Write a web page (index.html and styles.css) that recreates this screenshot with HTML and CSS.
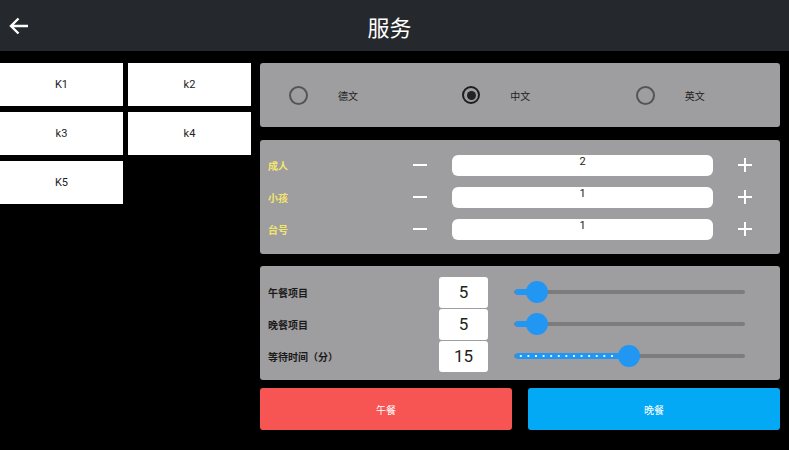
FILE: index.html
```html
<!DOCTYPE html>
<html lang="zh">
<head>
    <meta charset="UTF-8">
    <meta name="viewport" content="width=device-width, initial-scale=1.0">
    <title>服务</title>
    <link rel="stylesheet" href="styles.css">
</head>
<body>
    <div class="header">
        <button class="back-btn">
            <svg width="20" height="18" viewBox="0 0 20 18"><path d="M2 9H19M9.5 1.5L2 9L9.5 16.5" fill="none" stroke="#fff" stroke-width="2.4"/></svg>
        </button>
        <h1>服务</h1>
    </div>
    <div class="main">
        <div class="tables">
            <div class="tile">K1</div>
            <div class="tile">k2</div>
            <div class="tile">k3</div>
            <div class="tile">k4</div>
            <div class="tile">K5</div>
        </div>
        <div class="side">
            <div class="panel lang">
                <label class="lang-item"><span class="radio"></span>德文</label>
                <label class="lang-item"><span class="radio checked"></span>中文</label>
                <label class="lang-item"><span class="radio"></span>英文</label>
            </div>
            <div class="panel counters">
                <div class="counter-row">
                    <span class="counter-label">成人</span>
                    <span class="minus"></span>
                    <div class="count-box">2</div>
                    <span class="plus"></span>
                </div>
                <div class="counter-row">
                    <span class="counter-label">小孩</span>
                    <span class="minus"></span>
                    <div class="count-box">1</div>
                    <span class="plus"></span>
                </div>
                <div class="counter-row">
                    <span class="counter-label">台号</span>
                    <span class="minus"></span>
                    <div class="count-box">1</div>
                    <span class="plus"></span>
                </div>
            </div>
            <div class="panel settings">
                <div class="setting-row">
                    <span class="setting-label">午餐项目</span>
                    <div class="value-box">5</div>
                    <div class="slider">
                        <div class="track"></div>
                        <div class="fill" style="width: 23px"></div>
                        <div class="thumb" style="left: 23px"></div>
                    </div>
                </div>
                <div class="setting-row">
                    <span class="setting-label">晚餐项目</span>
                    <div class="value-box">5</div>
                    <div class="slider">
                        <div class="track"></div>
                        <div class="fill" style="width: 23px"></div>
                        <div class="thumb" style="left: 23px"></div>
                    </div>
                </div>
                <div class="setting-row">
                    <span class="setting-label">等待时间（分）</span>
                    <div class="value-box">15</div>
                    <div class="slider">
                        <div class="track"></div>
                        <div class="fill dotted" style="width: 115px"></div>
                        <div class="thumb" style="left: 115px"></div>
                    </div>
                </div>
            </div>
            <div class="actions">
                <button class="meal-btn lunch">午餐</button>
                <button class="meal-btn dinner">晚餐</button>
            </div>
        </div>
    </div>
</body>
</html>
```

FILE: styles.css
```css
body {
    margin: 0;
    background: #000;
    font-family: Roboto, "Noto Sans CJK SC", sans-serif;
    width: 789px;
    height: 450px;
    overflow: hidden;
}
.header {
    position: relative;
    height: 51px;
    background: #25282c;
    display: flex;
    align-items: center;
    justify-content: center;
    padding-right: 10px;
}
.header h1 {
    margin: 0;
    color: #fff;
    font-size: 22px;
    font-weight: normal;
}
.back-btn {
    position: absolute;
    left: 9px;
    top: 17px;
    padding: 0;
    border: none;
    background: none;
    display: flex;
}
.main {
    display: flex;
    gap: 10px;
}
.tables {
    width: 250px;
    padding-top: 12px;
    display: grid;
    grid-template-columns: 123px 123px;
    grid-auto-rows: 43px;
    column-gap: 5px;
    row-gap: 6px;
    align-content: start;
}
.tile {
    background: #fff;
    display: flex;
    align-items: center;
    justify-content: center;
    font-size: 11px;
    color: #222;
}
.side {
    width: 520px;
    padding-top: 12px;
    display: flex;
    flex-direction: column;
}
.panel {
    background: #9e9d9f;
    border-radius: 3px;
}
.lang {
    height: 64px;
    display: grid;
    grid-template-columns: repeat(3, 1fr);
    align-items: center;
}
.lang-item {
    display: flex;
    align-items: center;
    gap: 30px;
    padding-left: 29px;
    font-size: 10px;
    color: #222;
}
.radio {
    width: 15px;
    height: 15px;
    border: 2px solid #555;
    border-radius: 50%;
    display: flex;
    align-items: center;
    justify-content: center;
}
.radio.checked {
    border: 2.5px solid #1e1e1e;
    width: 14px;
    height: 14px;
}
.radio.checked::after {
    content: "";
    width: 9px;
    height: 9px;
    border-radius: 50%;
    background: #222;
}
.counters {
    margin-top: 13px;
    padding: 9px 3px 9px 8px;
}
.counter-row {
    height: 32px;
    display: flex;
    align-items: center;
}
.counter-label {
    width: 132px;
    font-size: 10px;
    font-weight: bold;
    color: #f3e66b;
}
.minus, .plus {
    position: relative;
    height: 14px;
}
.minus {
    width: 40px;
    margin-right: 12px;
}
.plus {
    width: 64px;
}
.minus::before, .plus::before, .plus::after {
    content: "";
    position: absolute;
    background: #fff;
}
.minus::before, .plus::before {
    left: 50%;
    top: 6px;
    width: 14px;
    height: 1.5px;
    margin-left: -7px;
}
.plus::after {
    left: 50%;
    top: 0;
    width: 1.5px;
    height: 14px;
    margin-left: -0.75px;
}
.count-box {
    width: 261px;
    height: 21px;
    background: #fff;
    border-radius: 6px;
    text-align: center;
    font-size: 11px;
    line-height: 13px;
    color: #222;
    align-self: flex-start;
    margin-top: 6px;
}
.settings {
    margin-top: 12px;
    padding: 10px 0 8px 8px;
}
.setting-row {
    height: 32px;
    display: flex;
    align-items: center;
}
.setting-label {
    width: 171px;
    font-size: 10px;
    font-weight: bold;
    color: #1a1a1a;
}
.value-box {
    width: 49px;
    height: 31px;
    background: #fff;
    border-radius: 3px;
    display: flex;
    align-items: center;
    justify-content: center;
    font-size: 17px;
    color: #222;
}
.slider {
    position: relative;
    width: 231px;
    height: 22px;
    margin-left: 26px;
}
.track {
    position: absolute;
    left: 0;
    right: 0;
    top: 9px;
    height: 4px;
    background: #7c7c7e;
    border-radius: 2px;
}
.fill {
    position: absolute;
    left: 1px;
    top: 8px;
    height: 6px;
    background: #2196f3;
    border-radius: 3px;
}
.fill.dotted {
    background-color: #2196f3;
    background-image: radial-gradient(circle, #e6f2ff 1.1px, transparent 1.5px);
    background-size: 7.6px 6px;
    background-position: 2px 0;
}
.thumb {
    position: absolute;
    top: 0;
    width: 22px;
    height: 22px;
    margin-left: -11px;
    border-radius: 50%;
    background: #2196f3;
}
.actions {
    margin-top: 8px;
    display: grid;
    grid-template-columns: 1fr 1fr;
    gap: 16px;
}
.meal-btn {
    height: 42px;
    border: none;
    border-radius: 3px;
    color: #fff;
    font-family: Roboto, "Noto Sans CJK SC", sans-serif;
    font-size: 10px;
}
.lunch {
    background: #f75454;
}
.dinner {
    background: #03a9f4;
}
```
